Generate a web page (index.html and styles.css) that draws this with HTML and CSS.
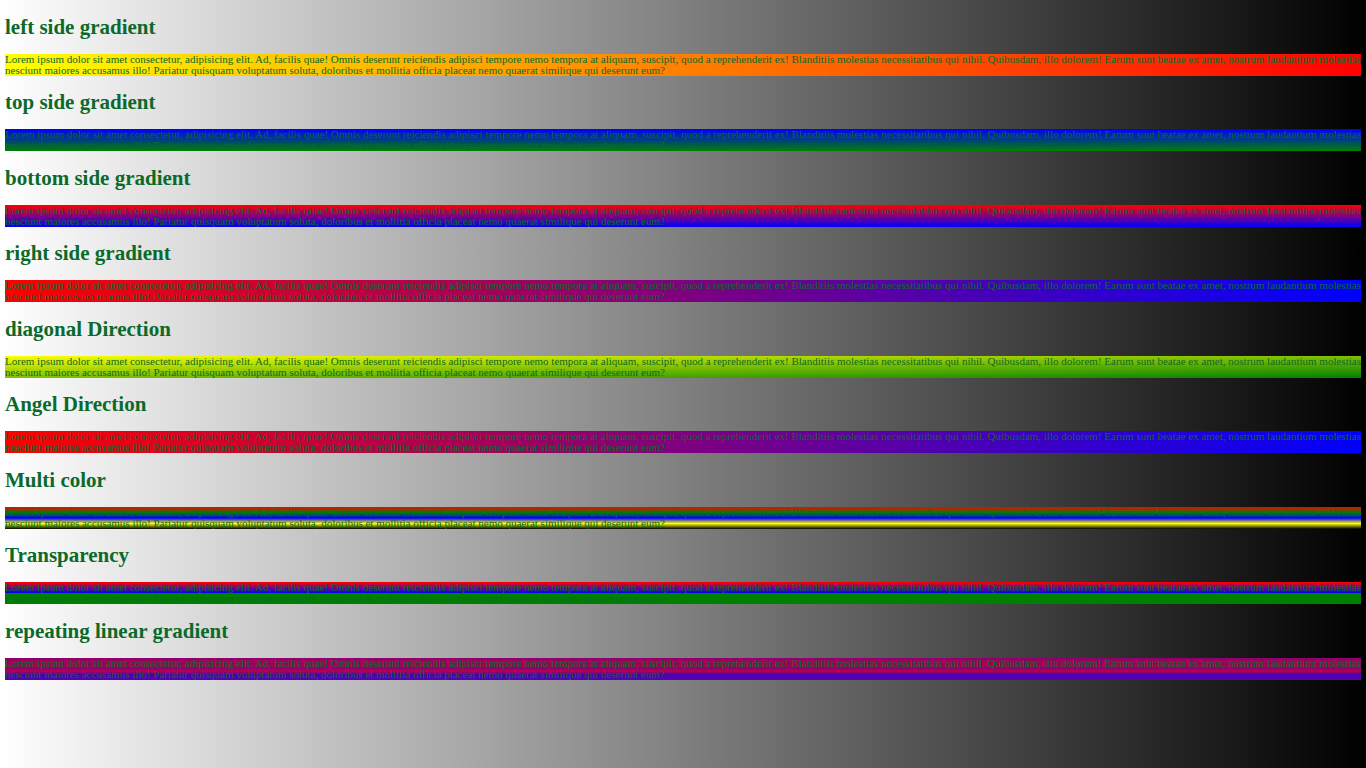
FILE: index.html
```html
<!DOCTYPE html>
<html lang="en">
<head>
<meta charset="utf-8">
<title>Linear gradients</title>
<link rel="stylesheet" href="styles.css">
</head>
<body>
<section><h1>left side gradient</h1><p class="left">Lorem ipsum dolor sit amet consectetur, adipisicing elit. Ad, facilis quae! Omnis deserunt reiciendis adipisci tempore nemo tempora at aliquam, suscipit, quod a reprehenderit ex! Blanditiis molestias necessitatibus qui nihil. Quibusdam, illo dolorem! Earum sunt beatae ex amet, nostrum laudantium molestias nesciunt maiores accusamus illo! Pariatur quisquam voluptatum soluta, doloribus et mollitia officia placeat nemo quaerat similique qui deserunt eum?</p></section>
<section><h1>top side gradient</h1><p class="top">Lorem ipsum dolor sit amet consectetur, adipisicing elit. Ad, facilis quae! Omnis deserunt reiciendis adipisci tempore nemo tempora at aliquam, suscipit, quod a reprehenderit ex! Blanditiis molestias necessitatibus qui nihil. Quibusdam, illo dolorem! Earum sunt beatae ex amet, nostrum laudantium molestias nesciunt maiores accusamus illo! Pariatur quisquam voluptatum soluta, doloribus et mollitia officia placeat nemo quaerat similique qui deserunt eum?</p></section>
<section><h1>bottom side gradient</h1><p class="bottom">Lorem ipsum dolor sit amet consectetur, adipisicing elit. Ad, facilis quae! Omnis deserunt reiciendis adipisci tempore nemo tempora at aliquam, suscipit, quod a reprehenderit ex! Blanditiis molestias necessitatibus qui nihil. Quibusdam, illo dolorem! Earum sunt beatae ex amet, nostrum laudantium molestias nesciunt maiores accusamus illo! Pariatur quisquam voluptatum soluta, doloribus et mollitia officia placeat nemo quaerat similique qui deserunt eum?</p></section>
<section><h1>right side gradient</h1><p class="right">Lorem ipsum dolor sit amet consectetur, adipisicing elit. Ad, facilis quae! Omnis deserunt reiciendis adipisci tempore nemo tempora at aliquam, suscipit, quod a reprehenderit ex! Blanditiis molestias necessitatibus qui nihil. Quibusdam, illo dolorem! Earum sunt beatae ex amet, nostrum laudantium molestias nesciunt maiores accusamus illo! Pariatur quisquam voluptatum soluta, doloribus et mollitia officia placeat nemo quaerat similique qui deserunt eum?</p></section>
<section><h1>diagonal Direction</h1><p class="diagonal">Lorem ipsum dolor sit amet consectetur, adipisicing elit. Ad, facilis quae! Omnis deserunt reiciendis adipisci tempore nemo tempora at aliquam, suscipit, quod a reprehenderit ex! Blanditiis molestias necessitatibus qui nihil. Quibusdam, illo dolorem! Earum sunt beatae ex amet, nostrum laudantium molestias nesciunt maiores accusamus illo! Pariatur quisquam voluptatum soluta, doloribus et mollitia officia placeat nemo quaerat similique qui deserunt eum?</p></section>
<section><h1>Angel Direction</h1><p class="angle">Lorem ipsum dolor sit amet consectetur, adipisicing elit. Ad, facilis quae! Omnis deserunt reiciendis adipisci tempore nemo tempora at aliquam, suscipit, quod a reprehenderit ex! Blanditiis molestias necessitatibus qui nihil. Quibusdam, illo dolorem! Earum sunt beatae ex amet, nostrum laudantium molestias nesciunt maiores accusamus illo! Pariatur quisquam voluptatum soluta, doloribus et mollitia officia placeat nemo quaerat similique qui deserunt eum?</p></section>
<section><h1>Multi color</h1><p class="multi">Lorem ipsum dolor sit amet consectetur, adipisicing elit. Ad, facilis quae! Omnis deserunt reiciendis adipisci tempore nemo tempora at aliquam, suscipit, quod a reprehenderit ex! Blanditiis molestias necessitatibus qui nihil. Quibusdam, illo dolorem! Earum sunt beatae ex amet, nostrum laudantium molestias nesciunt maiores accusamus illo! Pariatur quisquam voluptatum soluta, doloribus et mollitia officia placeat nemo quaerat similique qui deserunt eum?</p></section>
<section><h1>Transparency</h1><p class="transparency">Lorem ipsum dolor sit amet consectetur, adipisicing elit. Ad, facilis quae! Omnis deserunt reiciendis adipisci tempore nemo tempora at aliquam, suscipit, quod a reprehenderit ex! Blanditiis molestias necessitatibus qui nihil. Quibusdam, illo dolorem! Earum sunt beatae ex amet, nostrum laudantium molestias nesciunt maiores accusamus illo! Pariatur quisquam voluptatum soluta, doloribus et mollitia officia placeat nemo quaerat similique qui deserunt eum?</p></section>
<section><h1>repeating linear gradient</h1><p class="repeating">Lorem ipsum dolor sit amet consectetur, adipisicing elit. Ad, facilis quae! Omnis deserunt reiciendis adipisci tempore nemo tempora at aliquam, suscipit, quod a reprehenderit ex! Blanditiis molestias necessitatibus qui nihil. Quibusdam, illo dolorem! Earum sunt beatae ex amet, nostrum laudantium molestias nesciunt maiores accusamus illo! Pariatur quisquam voluptatum soluta, doloribus et mollitia officia placeat nemo quaerat similique qui deserunt eum?</p></section>
</body>
</html>
```
FILE: styles.css
```css
* { box-sizing: border-box; }
body {
  margin: 0;
  min-height: 100vh;
  padding: 0 5px 88px;
  display: grid;
  grid-auto-rows: 1fr;
  font-family: "Liberation Serif", "Times New Roman", serif;
  color: #0b6a2b;
  background: linear-gradient(to right, white, black);
}
section { display: flex; flex-direction: column; justify-content: flex-end; }
h1 { margin: 0 0 15px; font-size: 21px; line-height: 24px; }
p { margin: 0; font-size: 11px; line-height: 11px; }
.left { background: linear-gradient(to right, yellow, red); }
.top { background: linear-gradient(blue, green); }
.bottom { background: linear-gradient(to top, blue, red); }
.right { background: linear-gradient(to left, blue, red); }
.diagonal { background: linear-gradient(to bottom right, yellow, green); }
.angle { background: linear-gradient(90deg, red, blue); }
.multi { background: linear-gradient(red, green, blue, yellow, black); }
.transparency { background: linear-gradient(red, blue 50%, green 50%); }
.repeating {
  background: linear-gradient(
    #80007f, #a0005f 1px, #70008f 2px, #d0002f 3px, #80007f 4px,
    #d0002f 5px, #60009f 6px, #e0001f 7px, #70008f 8px, #d0002f 9px,
    #60009f 10px, #c0003f 11px, #80007f 12px, #e0001f 13px, #80007f 14px,
    #a0005f 15px, #2000df 16px, #80007f 17px, #2000df 18px, #80007f 19px,
    #3000cf 20px, #70008f 21px, #5000af 22px);
}
```
